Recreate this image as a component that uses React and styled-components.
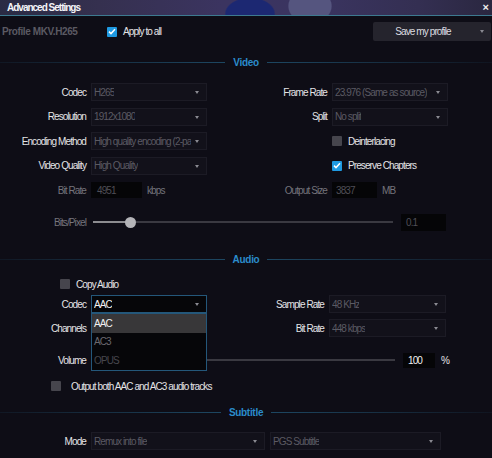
import React from "react";
import styled, { createGlobalStyle } from "styled-components";

const Global = createGlobalStyle`
  html, body { margin: 0; padding: 0; background: #0e0d16; }
  body { font-family: "Liberation Sans", Arial, sans-serif; font-size: 10px; }
  * { box-sizing: border-box; }
`;

const Window = styled.div`
  width: 492px;
  height: 458px;
  overflow: hidden;
  background: #0e0d16;
  display: flex;
  flex-direction: column;
  color: #e4e4e6;
  letter-spacing: -0.9px;
`;

const TitleBar = styled.div`
  height: 16px;
  flex: none;
  display: flex;
  align-items: center;
  justify-content: space-between;
  padding: 0 3px 1px 7px;
  border-bottom: 1px solid #3d7a90;
  background:
    radial-gradient(ellipse 30px 24px at 310px 6px, #55557f 0 70%, transparent 74%),
    radial-gradient(ellipse 40px 26px at 250px 14px, #1c2872 0 60%, transparent 64%),
    linear-gradient(90deg, #2a2b44 0%, #35304f 20%, #3b3460 45%, #3a3460 65%, #342f52 85%, #2a2740 100%);
`;

const Title = styled.span`
  font-weight: bold;
  font-size: 10px;
  letter-spacing: -1px;
  color: #f4f4f8;
`;

const Close = styled.span`
  font-weight: bold;
  font-size: 11px;
  color: #f0f0f0;
  letter-spacing: 0;
`;

const Block = styled.div`
  margin-top: ${(p) => p.$mt || 0}px;
  flex: none;
`;

const ProfileRow = styled(Block)`
  height: 19px;
  display: flex;
  align-items: center;
`;

const ProfileName = styled.span`
  width: 107px;
  padding-left: 2px;
  font-weight: bold;
  color: #5b5a63;
  letter-spacing: -0.4px;
`;

const SaveButton = styled.div`
  margin-left: auto;
  margin-right: 1px;
  width: 118px;
  height: 19px;
  border-radius: 2px;
  background: #25242d;
  color: #dcdce0;
  display: flex;
  align-items: center;
  justify-content: center;
  position: relative;
  padding-right: 18px;
`;

const ButtonCaret = styled.span`
  position: absolute;
  right: 7px;
  top: 8px;
  display: flex;
`;

const Divider = styled(Block)`
  height: 12px;
  display: flex;
  align-items: center;
`;

const Line = styled.div`
  flex: 1;
  height: 1px;
  background: ${(p) =>
    p.$side === "left"
      ? "linear-gradient(90deg, rgba(28,66,92,0.2), #1d4762)"
      : "linear-gradient(90deg, #1d4762, rgba(28,66,92,0.15))"};
`;

const SectionTitle = styled.span`
  margin: 0 8px;
  font-weight: bold;
  font-size: 10px;
  letter-spacing: -0.3px;
  color: #2b8ccc;
`;

const Rows = styled(Block)`
  display: flex;
  flex-direction: column;
  gap: ${(p) => p.$gap || 6.5}px;
`;

const Row = styled.div`
  height: 18px;
  display: flex;
  align-items: center;
`;

const Half = styled.div`
  width: ${(p) => (p.$auto ? "auto" : "246px")};
  display: flex;
  align-items: center;
  gap: 5px;
`;

const Label = styled.span`
  width: ${(p) => p.$w}px;
  flex: none;
  text-align: right;
  white-space: nowrap;
  color: ${(p) => (p.$dim ? "#75747c" : "#e4e4e6")};
`;

const SelectBox = styled.div`
  position: relative;
  width: ${(p) => p.$w || 116}px;
  height: 18px;
  flex: none;
  display: flex;
  align-items: center;
  padding: 0 14px 0 2px;
  background: ${(p) => (p.$open ? "#060609" : "#12111a")};
  border: 1px solid ${(p) => (p.$open ? "#24577a" : "#1c1b25")};
  color: ${(p) => (p.$open ? "#f2f2f2" : "#5b5a63")};
`;

const SelectText = styled.span`
  white-space: nowrap;
  overflow: hidden;
`;

const CaretWrap = styled.span`
  position: absolute;
  right: 7px;
  top: 7px;
  display: flex;
`;

const Caret = () => (
  <svg width="4" height="3" viewBox="0 0 4 3">
    <path d="M0 0 H4 L2 3 Z" fill="#8a8a92" />
  </svg>
);

const Select = ({ value, w, open, children }) => (
  <SelectBox $w={w} $open={open}>
    {value && <SelectText>{value}</SelectText>}
    <CaretWrap>
      <Caret />
    </CaretWrap>
    {children}
  </SelectBox>
);

const Menu = styled.div`
  position: absolute;
  left: -1px;
  top: 17px;
  width: 116px;
  background: #060609;
  border: 1px solid #24577a;
  z-index: 5;
`;

const MenuItem = styled.div`
  height: 18.5px;
  display: flex;
  align-items: center;
  padding-left: 2px;
  background: ${(p) => (p.$active ? "#383739" : "transparent")};
  color: ${(p) => p.$color};
`;

const Input = styled.div`
  width: ${(p) => p.$w}px;
  height: ${(p) => p.$h || 16}px;
  flex: none;
  background: #050507;
  display: flex;
  align-items: center;
  padding-left: ${(p) => p.$pl || 6}px;
  color: ${(p) => (p.$bright ? "#f0f0f0" : "#4f4e56")};
`;

const Unit = styled.span`
  color: ${(p) => (p.$bright ? "#e4e4e6" : "#75747c")};
  margin-left: ${(p) => p.$ml || 0}px;
`;

const Check = styled.span`
  width: 10px;
  height: 10px;
  flex: none;
  border-radius: 1px;
  display: flex;
  align-items: center;
  justify-content: center;
  background: ${(p) => (p.$on ? "#1f9ae2" : "#46454d")};
`;

const CheckRow = styled.div`
  display: flex;
  align-items: center;
  gap: ${(p) => p.$gap || 6}px;
  margin-left: ${(p) => p.$ml || 0}px;
`;

const Checkbox = ({ on, label, gap, ml }) => (
  <CheckRow $gap={gap} $ml={ml}>
    <Check $on={on}>
      {on && (
        <svg width="8" height="7" viewBox="0 0 8 7">
          <path d="M1 3.6 L3 5.6 L7 1.2" stroke="#fff" strokeWidth="1.5" fill="none" />
        </svg>
      )}
    </Check>
    <span>{label}</span>
  </CheckRow>
);

const SliderRow = styled(Block)`
  height: 18px;
  display: flex;
  align-items: center;
`;

const Track = styled.div`
  position: relative;
  width: ${(p) => p.$w}px;
  height: 2px;
  flex: none;
  background: #3a3941;
  margin: 0 ${(p) => p.$mr}px 0 7px;
`;

const Fill = styled.div`
  height: 100%;
  background: #8c8c90;
`;

const Thumb = styled.div`
  position: absolute;
  top: -4.5px;
  width: 11px;
  height: 11px;
  margin-left: -5.5px;
  border-radius: 50%;
  background: #b4b4b8;
`;

const Slider = ({ w, value, mr }) => (
  <Track $w={w} $mr={mr}>
    <Fill style={{ width: value }} />
    <Thumb style={{ left: value }} />
  </Track>
);

const Plain = styled(Block)`
  height: 18px;
  display: flex;
  align-items: center;
`;

export default function App() {
  return (
    <>
      <Global />
      <Window>
        <TitleBar>
          <Title>Advanced Settings</Title>
          <Close>×</Close>
        </TitleBar>

        <ProfileRow $mt={6}>
          <ProfileName>Profile MKV.H265</ProfileName>
          <Checkbox on label="Apply to all" gap={6} />
          <SaveButton>
            Save my profile
            <ButtonCaret>
              <Caret />
            </ButtonCaret>
          </SaveButton>
        </ProfileRow>

        <Divider $mt={15}>
          <Line $side="left" />
          <SectionTitle>Video</SectionTitle>
          <Line $side="right" />
        </Divider>

        <Rows $mt={15}>
          <Row>
            <Half>
              <Label $w={86}>Codec</Label>
              <Select value="H265" />
            </Half>
            <Half>
              <Label $w={81}>Frame Rate</Label>
              <Select value="23.976 (Same as source)" />
            </Half>
          </Row>
          <Row>
            <Half>
              <Label $w={86}>Resolution</Label>
              <Select value="1912x1080" />
            </Half>
            <Half>
              <Label $w={81}>Split</Label>
              <Select value="No split" />
            </Half>
          </Row>
          <Row>
            <Half>
              <Label $w={86}>Encoding Method</Label>
              <Select value="High quality encoding (2-pa" />
            </Half>
            <Half>
              <Checkbox label="Deinterlacing" gap={6} ml={86} />
            </Half>
          </Row>
          <Row>
            <Half>
              <Label $w={86}>Video Quality</Label>
              <Select value="High Quality" />
            </Half>
            <Half>
              <Checkbox on label="Preserve Chapters" gap={6} ml={86} />
            </Half>
          </Row>
          <Row>
            <Half>
              <Label $w={86} $dim>Bit Rate</Label>
              <Input $w={51}>4951</Input>
              <Unit>kbps</Unit>
            </Half>
            <Half>
              <Label $w={81} $dim>Output Size</Label>
              <Input $w={45} $pl={4}>3837</Input>
              <Unit>MB</Unit>
            </Half>
          </Row>
        </Rows>

        <SliderRow $mt={14}>
          <Label $w={86} $dim>Bits/Pixel</Label>
          <Slider w={300} value={37} mr={8} />
          <Input $w={45} $h={17} $pl={5}>0.1</Input>
        </SliderRow>

        <Divider $mt={22}>
          <Line $side="left" />
          <SectionTitle>Audio</SectionTitle>
          <Line $side="right" />
        </Divider>

        <Plain $mt={10}>
          <Checkbox label="Copy Audio" gap={6} ml={60} />
        </Plain>

        <Rows $mt={2} $gap={6}>
          <Row>
            <Half>
              <Label $w={86}>Codec</Label>
              <Select value="AAC" open>
                <Menu>
                  <MenuItem $active $color="#f2f2f2">AAC</MenuItem>
                  <MenuItem $color="#6a6970">AC3</MenuItem>
                  <MenuItem $color="#47464d">OPUS</MenuItem>
                </Menu>
              </Select>
            </Half>
            <Half>
              <Label $w={78}>Sample Rate</Label>
              <Select value="48 KHz" w={117} />
            </Half>
          </Row>
          <Row>
            <Half>
              <Label $w={86}>Channels</Label>
              <Select />
            </Half>
            <Half>
              <Label $w={78}>Bit Rate</Label>
              <Select value="448 kbps" w={117} />
            </Half>
          </Row>
        </Rows>

        <SliderRow $mt={14}>
          <Label $w={86}>Volume</Label>
          <Slider w={302} value={60} mr={8} />
          <Input $w={32} $h={15} $pl={5} $bright>100</Input>
          <Unit $bright $ml={6}>%</Unit>
        </SliderRow>

        <Plain $mt={8}>
          <Checkbox label="Output both AAC and AC3 audio tracks" gap={10} ml={51} />
        </Plain>

        <Divider $mt={11}>
          <Line $side="left" />
          <SectionTitle>Subtitle</SectionTitle>
          <Line $side="right" />
        </Divider>

        <Plain $mt={14}>
          <Half $auto>
            <Label $w={86}>Mode</Label>
            <Select value="Remux into file" w={174} />
            <Select value="PGS Subtitle" w={171} />
          </Half>
        </Plain>
      </Window>
    </>
  );
}
